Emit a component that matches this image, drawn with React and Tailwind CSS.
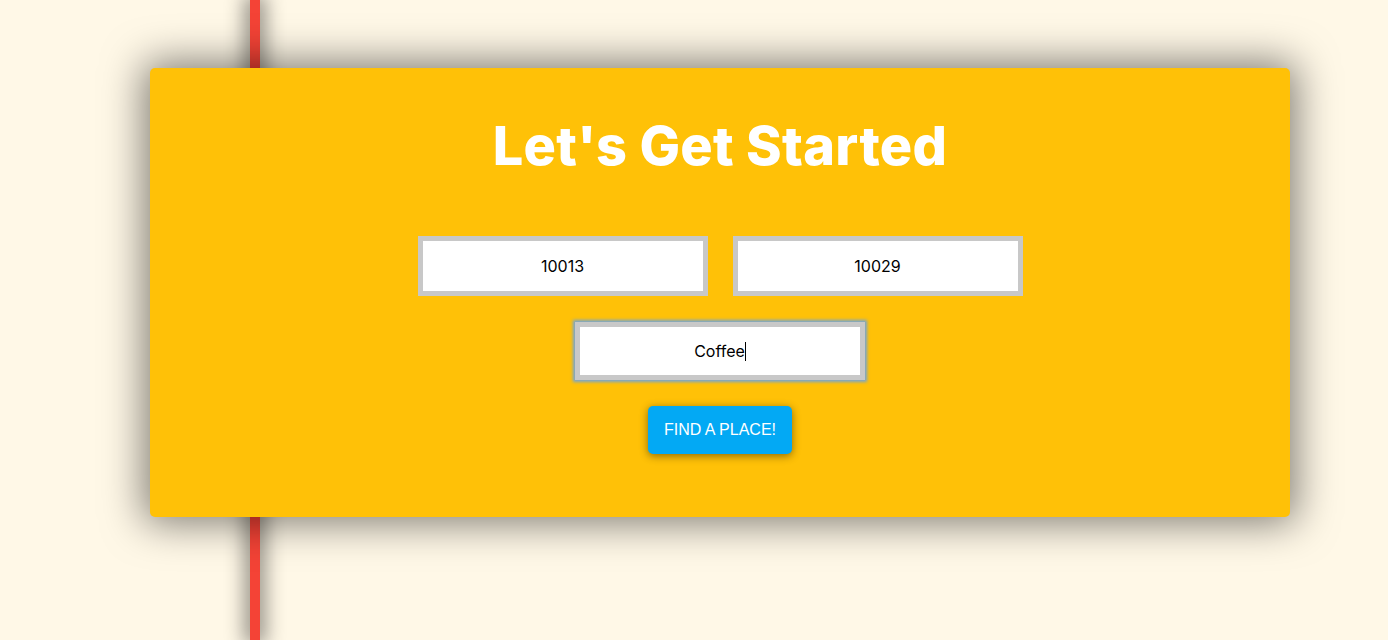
import React from "react";

export default function App() {
  return (
    <div className="relative min-h-screen h-[640px] overflow-hidden bg-[#fff8e7]" style={{ fontFamily: "Inter, 'Noto Sans', sans-serif" }}>
      {/* vertical rule behind the card */}
      <div className="absolute left-[250px] top-0 bottom-0 w-[10px] bg-[#f44336] shadow-[0_0_20px_5px_rgba(0,0,0,0.45)]" />

      <div className="relative z-10 ml-[150px] pt-[68px]">
        <div className="w-[1140px] h-[449px] rounded-[5px] bg-[#ffc107] shadow-[0_0_40px_6px_rgba(0,0,0,0.5)] flex flex-col items-center">
          <h1 className="mt-[38px] text-[54px] leading-[80px] font-extrabold text-white tracking-[0.3px]">
            Let's Get Started
          </h1>

          <div className="mt-[50px] flex gap-[25px]">
            <input
              readOnly
              value="10013"
              className="w-[290px] h-[60px] border-[5px] border-[#c8c8c8] bg-white text-center text-[16px] text-black outline-none"
            />
            <input
              readOnly
              value="10029"
              className="w-[290px] h-[60px] border-[5px] border-[#c8c8c8] bg-white text-center text-[16px] text-black outline-none"
            />
          </div>

          <div className="mt-[26px] w-[290px] h-[58px] border-[5px] border-[#c8c8c8] bg-white shadow-[0_0_3px_2px_#72a4d8] flex items-center justify-center text-[16px] text-black">
            <span>Coffee</span>
            <span className="w-px h-[19px] bg-black" />
          </div>

          <button
            className="mt-[26px] w-[144px] h-[48px] rounded-[5px] bg-[#03a9f4] text-white text-[16px] shadow-[0_2px_8px_rgba(0,0,0,0.45)]"
            style={{ fontFamily: "'Liberation Sans', Arial, sans-serif" }}
          >
            FIND A PLACE!
          </button>
        </div>
      </div>
    </div>
  );
}
